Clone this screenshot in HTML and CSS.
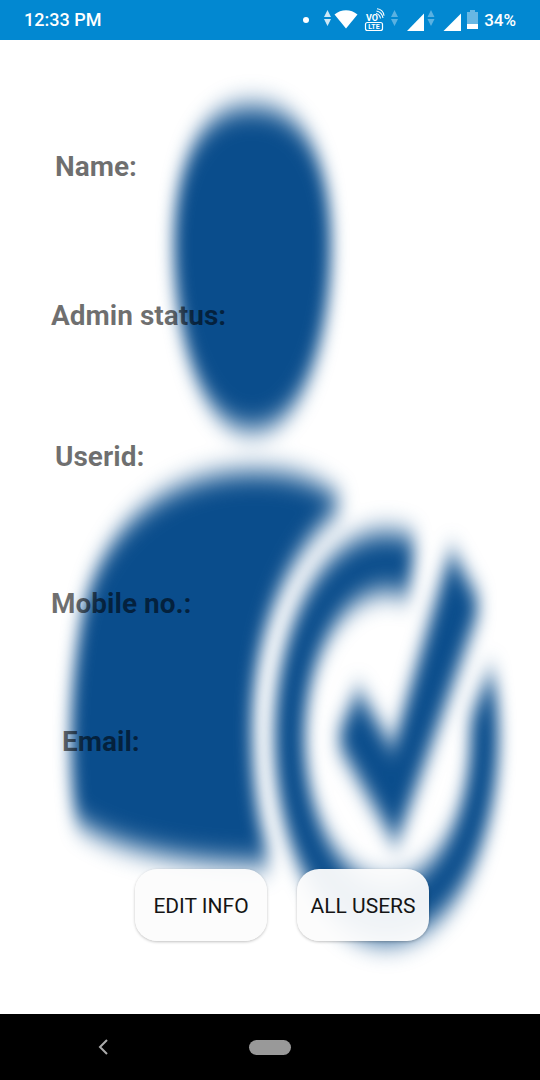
FILE: index.html
```html
<!DOCTYPE html>
<html lang="en">
<head>
<meta charset="utf-8">
<meta name="viewport" content="width=device-width, initial-scale=1">
<title>User profile</title>
<link rel="stylesheet" href="styles.css">
</head>
<body>
<header class="status-bar">
  <span class="clock">12:33 PM</span>
  <div class="indicators">
    <svg class="status-icons" width="180" height="40" viewBox="300 0 180 40" fill="#fff" aria-hidden="true">
      <circle cx="306" cy="20" r="3"/>
      <path opacity=".8" d="M324 17l3.500-7 3.500 7zM324 19h7l-3.500 7z"/>
      <path d="M334.500 14.500C341 8.800 351 8.800 357.500 14.500L346 28.500z"/>
      <text class="volte-text" x="366" y="20.500">VO</text>
      <path d="M376 13.500a6 6 0 0 1 4.500 5M376.500 11a8.500 8.500 0 0 1 6.500 7M377 8.700c3.500.3 6.500 3 7 7" fill="none" stroke="#fff" stroke-width="1.100"/>
      <rect x="365.500" y="22.500" width="17" height="8" rx="2" fill="none" stroke="#fff" stroke-width="1.200"/>
      <text class="lte-text" x="374" y="29.200" text-anchor="middle">LTE</text>
      <path opacity=".35" d="M391 17l3.500-7 3.500 7zM391 19h7l-3.500 7z"/>
      <path d="M407 31l17-17.500V31z"/>
      <path opacity=".35" d="M427.500 17l3.500-7 3.500 7zM427.500 19h7l-3.500 7z"/>
      <path d="M443.500 31l17.500-17.500V31z"/>
      <path opacity=".4" d="M470 10h5v2h3v12h-11V12h3z"/>
      <path d="M467 24h11v5h-11z"/>
    </svg>
    <span class="battery">34%</span>
  </div>
</header>
<main class="profile">
  <svg class="backdrop" viewBox="0 40 540 974" preserveAspectRatio="none" aria-hidden="true">
    <defs>
      <filter id="soft" filterUnits="userSpaceOnUse" x="0" y="40" width="540" height="974" color-interpolation-filters="sRGB">
        <feGaussianBlur stdDeviation="8 14"/>
      </filter>
    </defs>
    <g fill="#0a4d8c" filter="url(#soft)">
      <path d="M252 107C305 107 331 164 331 244C331 340 302 429 252 429C203 429 174 340 174 244C174 164 200 107 252 107Z"/>
      <path d="M255 472C300 472 325 485 345 504C288 549 252 630 252 730C252 780 258 828 272 864C190 864 110 848 76 820C67 760 70 680 83 612C105 519 175 472 255 472Z"/>
      <path d="M416 540A112 204 0 1 0 492 668L470 720A83 146 0 1 1 408 596Z"/>
      <path d="M451 550L481 604L396 844L336 740L358 690L393 748Z"/>
    </g>
  </svg>
  <div class="fields">
    <p class="field">Name:</p>
    <p class="field field-wide">Admin status:</p>
    <p class="field">Userid:</p>
    <p class="field field-wide">Mobile no.:</p>
    <p class="field field-short">Email:</p>
  </div>
  <div class="actions">
    <button class="action" type="button">EDIT INFO</button>
    <button class="action" type="button">ALL USERS</button>
  </div>
</main>
<nav class="nav-bar" aria-label="System navigation">
  <button class="nav-back" type="button" aria-label="Back">
    <svg width="16" height="20" viewBox="0 0 16 20" fill="none" stroke="#aaa" stroke-width="2" aria-hidden="true"><path d="M12 3L5 10l7 7"/></svg>
  </button>
  <button class="nav-home" type="button" aria-label="Home"></button>
</nav>
</body>
</html>
```

FILE: styles.css
```css
* {
  box-sizing: border-box;
}

body {
  margin: 0;
  min-height: 100vh;
  display: flex;
  flex-direction: column;
  background: #fff;
  font-family: Roboto, "Liberation Sans", sans-serif;
}

.status-bar {
  height: 40px;
  padding: 0 24px;
  display: flex;
  align-items: center;
  justify-content: space-between;
  background: #0288d1;
  color: #fff;
  font-size: 18px;
  font-weight: 500;
  line-height: 42px;
}

.indicators {
  display: flex;
  align-items: center;
  gap: 4px;
}

.battery {
  font-size: 17px;
}

.status-icons {
  display: block;
}

.volte-text {
  font-size: 9px;
  font-weight: 700;
}

.lte-text {
  font-size: 7px;
  font-weight: 700;
}

.profile {
  position: relative;
  flex: 1;
  display: flex;
  flex-direction: column;
  padding: 110px 0 73px;
}

.backdrop {
  position: absolute;
  inset: 0;
  width: 100%;
  height: 100%;
}

.fields {
  position: relative;
  flex: 1;
  display: grid;
  grid-template-rows: 149fr 141fr 147fr 138fr 144fr;
}

.field {
  margin: 0;
  padding-left: 55px;
  color: rgba(0, 0, 0, 0.56);
  font-size: 28px;
  font-weight: 700;
  line-height: 33px;
}

.field-wide {
  padding-left: 51px;
}

.field-short {
  padding-left: 62px;
}

.actions {
  position: relative;
  display: flex;
  justify-content: center;
  gap: 30px;
  padding-left: 24px;
}

.action {
  width: 132px;
  height: 72px;
  padding: 2px 0 0;
  border: 0;
  border-radius: 22px;
  background: rgba(252, 252, 252, 0.95);
  box-shadow: 0 1px 3px rgba(0, 0, 0, 0.25);
  color: #151515;
  font-family: inherit;
  font-size: 21px;
  font-weight: 400;
  white-space: nowrap;
}

.nav-bar {
  height: 66px;
  display: grid;
  grid-template-columns: 1fr auto 1fr;
  align-items: center;
  background: #000;
}

.nav-back {
  justify-self: center;
  display: flex;
  padding: 0 44px 0 0;
  border: 0;
  background: none;
}

.nav-home {
  width: 42px;
  height: 15px;
  padding: 0;
  border: 0;
  border-radius: 8px;
  background: #999;
}
```
